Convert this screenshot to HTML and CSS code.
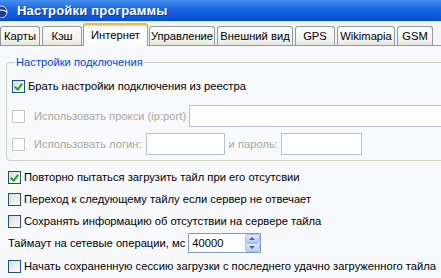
FILE: index.html
```html
<!DOCTYPE html>
<html lang="ru">
<head>
  <meta charset="UTF-8">
  <title>Настройки программы</title>
  <link rel="stylesheet" href="styles.css">
</head>
<body>
  <div class="window">
    <div class="titlebar">
      <svg class="app-icon" width="14" height="14" viewBox="0 0 14 14">
        <circle cx="5" cy="8" r="6" fill="#1d3f8f" stroke="#d8e4ff" stroke-width="1"/>
        <path d="M0 8 Q5 4 11 8" stroke="#fff" stroke-width="1.2" fill="none"/>
      </svg>
      <span class="title">Настройки программы</span>
    </div>

    <div class="tabs">
      <div class="tab">Карты</div>
      <div class="tab">Кэш</div>
      <div class="tab active">Интернет</div>
      <div class="tab">Управление</div>
      <div class="tab">Внешний вид</div>
      <div class="tab">GPS</div>
      <div class="tab">Wikimapia</div>
      <div class="tab">GSM</div>
    </div>

    <div class="page">
      <fieldset class="group">
        <legend>Настройки подключения</legend>
        <div class="row first-row">
          <span class="check checked"></span>
          <span>Брать настройки подключения из реестра</span>
        </div>
        <div class="row disabled">
          <span class="check"></span>
          <span class="pad">Использовать прокси (ip:port)</span>
          <span class="field proxy"></span>
        </div>
        <div class="row disabled">
          <span class="check"></span>
          <span class="pad">Использовать логин:</span>
          <span class="field login"></span>
          <span>и пароль:</span>
          <span class="field pass"></span>
        </div>
      </fieldset>

      <div class="row">
        <span class="check checked"></span>
        <span>Повторно пытаться загрузить тайл при его отсутсвии</span>
      </div>
      <div class="row">
        <span class="check"></span>
        <span>Переход к следующему тайлу если сервер не отвечает</span>
      </div>
      <div class="row">
        <span class="check"></span>
        <span>Сохранять информацию об отсутствии на сервере тайла</span>
      </div>
      <div class="row timeout">
        <span>Таймаут на сетевые операции, мс</span>
        <span class="spin">
          <span class="spin-value">40000</span>
          <span class="spin-btns">
            <span class="spin-btn up"></span>
            <span class="spin-btn down"></span>
          </span>
        </span>
      </div>
      <div class="row last">
        <span class="check"></span>
        <span>Начать сохраненную сессию загрузки с последнего удачно загруженного тайла</span>
      </div>
    </div>
  </div>
</body>
</html>
```

FILE: styles.css
```css
body {
  margin: 0;
  overflow: hidden;
  background: #f7f9fd;
  font-family: "Liberation Sans", sans-serif;
  font-size: 11.2px;
  color: #000;
}

.window {
  width: 480px;
}

.titlebar {
  height: 21px;
  display: flex;
  align-items: center;
  background: linear-gradient(#4690f0, #1e68e2 40%, #0d58da 80%, #0a4ecb);
  border-bottom: 1px solid #e8eefa;
}

.app-icon {
  margin-left: -4px;
  margin-right: 7px;
}

.title {
  color: #fff;
  font-weight: bold;
  font-size: 13px;
  letter-spacing: 0.2px;
  text-shadow: 1px 1px 0 #0c3aa0;
}

.tabs {
  display: flex;
  align-items: flex-end;
  height: 23px;
  gap: 2px;
  background: #f3f5fa;
  border-bottom: 1px solid #919b9c;
}

.tab {
  box-sizing: border-box;
  height: 19px;
  line-height: 18px;
  text-align: center;
  white-space: nowrap;
  border: 1px solid #919b9c;
  border-bottom: none;
  border-radius: 3px 3px 0 0;
  background: linear-gradient(#ffffff, #f2f2ee 70%, #e6e6df);
}

/* ширины вкладок как в оригинале */
.tab:nth-child(1) { width: 40px; }
.tab:nth-child(2) { width: 40px; }
.tab:nth-child(3) { width: 65px; margin: 0 -1px; }
.tab:nth-child(4) { width: 66px; }
.tab:nth-child(5) { width: 76px; }
.tab:nth-child(6) { width: 40px; }
.tab:nth-child(7) { width: 58px; }
.tab:nth-child(8) { width: 36px; }

.tab.active {
  height: 23px;
  line-height: 21px;
  margin-bottom: -1px;
  border-top: 2px solid #f6b745;
  background: #fcfcfe;
  box-shadow: inset 0 1px 0 #ffd27a;
  position: relative;
}

.page {
  padding: 10px 0 0 8px;
}

.group {
  margin: 0 0 5px -2px;
  padding: 8px 0 2px 5px;
  border: 1px solid #d0d0bf;
  border-radius: 4px;
}

.group legend {
  color: #0046d5;
  padding: 0 1px;
  margin-left: 3px;
}

.row {
  display: flex;
  align-items: center;
  height: 22px;
  white-space: nowrap;
}

.group .row {
  height: 28px;
}

.group .first-row {
  height: 20px;
  margin-bottom: 6px;
}

.check {
  width: 11px;
  height: 11px;
  flex: none;
  margin-right: 3px;
  border: 1px solid #1c5180;
  background: linear-gradient(135deg, #dcdcd4, #fefefe);
  position: relative;
}

.check.checked::after {
  content: "";
  position: absolute;
  left: 3px;
  top: 1px;
  width: 3px;
  height: 6px;
  border: solid #21a121;
  border-width: 0 2px 2px 0;
  transform: rotate(40deg);
}

.disabled {
  color: #aca899;
}

.disabled .check {
  border-color: #cac8bb;
  background: #fefefe;
}

.pad {
  margin-left: 6px;
}

.field {
  height: 20px;
  border: 1px solid #b9c2cf;
  background: #fff;
  flex: none;
}

.field.proxy {
  width: 300px;
  margin-left: 3px;
}

.field.login {
  width: 77px;
  margin: 0 4px;
}

.field.pass {
  width: 79px;
  margin-left: 3px;
}

.timeout {
  height: 22px;
}

.last {
  margin-top: 1px;
}

.spin {
  display: flex;
  align-items: center;
  margin-left: 3px;
  height: 18px;
  border: 1px solid #7f9db9;
  background: #fff;
}

.spin-value {
  width: 53px;
  padding-left: 3px;
}

.spin-btns {
  display: flex;
  flex-direction: column;
  width: 15px;
  height: 18px;
}

.spin-btn {
  flex: 1;
  border: 1px solid #a7bff8;
  border-radius: 2px;
  background: linear-gradient(#e0e9fd, #b6cbf6);
  position: relative;
}

.spin-btn::after {
  content: "";
  position: absolute;
  left: 3px;
  border-left: 3px solid transparent;
  border-right: 3px solid transparent;
}

.spin-btn.up::after {
  top: 2px;
  border-bottom: 3px solid #4d6185;
}

.spin-btn.down::after {
  top: 2px;
  border-top: 3px solid #4d6185;
}
```
